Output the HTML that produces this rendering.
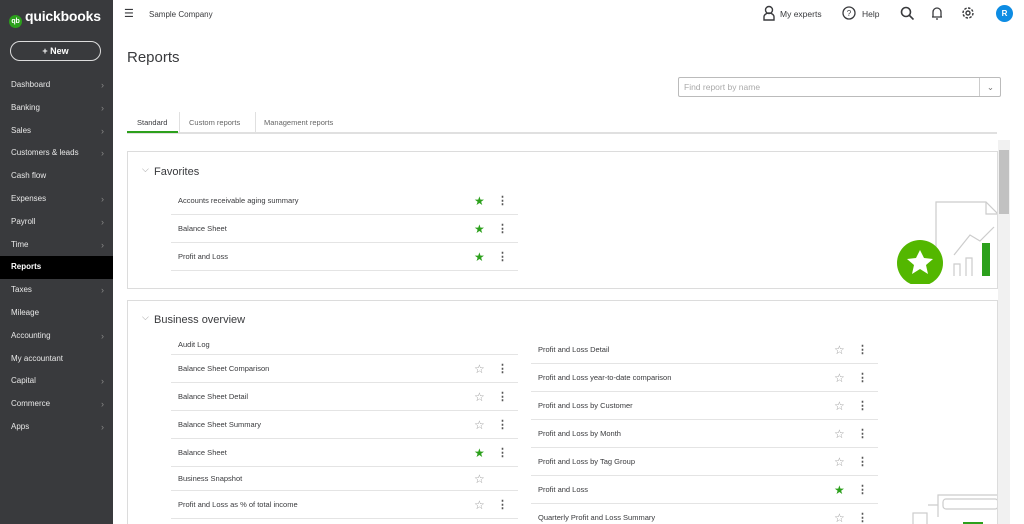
<!DOCTYPE html>
<html style="overflow:hidden;height:524px"><head><style>
*{box-sizing:border-box;margin:0;padding:0}
body{width:1024px;height:524px;overflow:hidden;font-family:"Liberation Sans",sans-serif;background:#fff;position:relative;color:#393a3d}
.sb{position:absolute;left:0;top:0;width:113px;height:524px;background:#393a3d;color:#fff}
.logo{position:absolute;left:9px;top:8px;font-size:14px;font-weight:bold;letter-spacing:-0.2px}
.logo .c{display:inline-block;width:13px;height:13px;border-radius:50%;background:#2ca01c;vertical-align:-2px;margin-right:3px;font-size:7px;text-align:center;line-height:13px}
.new{position:absolute;left:10px;top:41px;width:91px;height:20px;border:1px solid #ddd;border-radius:10px;text-align:center;font-size:9px;font-weight:bold;line-height:18px}
.nav{position:absolute;left:0;top:74px;width:113px}
.nav div{height:22.8px;line-height:22.8px;font-size:8px;padding-left:11px;color:#e8e8e8;position:relative}
.nav div.a{background:#000;color:#fff;font-weight:bold}
.nav div.r:after{content:"›";position:absolute;right:9px;color:#888;font-size:9px}
.t{position:absolute;font-size:8.5px;color:#393a3d}
h1{position:absolute;left:127px;top:49px;font-size:15px;font-weight:normal;color:#393a3d}
.search{position:absolute;left:678px;top:77px;width:323px;height:20px;border:1px solid #bbb;border-radius:2px;font-size:8.5px;color:#aaa;line-height:18px;padding-left:5px}
.search:after{content:"";position:absolute;right:0;top:0;width:20px;height:18px;border-left:1px solid #ccc}
.tabs{position:absolute;left:127px;top:112px;width:870px;height:22px;border-bottom:2px solid #e0e0e0;font-size:7.5px}
.tabs span{position:absolute;top:6px}
.card{position:absolute;left:127px;width:871px;border:1px solid #dcdcdc;background:#fff;overflow:hidden}
.card h2{position:absolute;left:26px;font-size:11px;font-weight:normal;color:#393a3d}
.card h2:before{content:"⌵";position:absolute;left:-12px;top:-2px;font-size:9px;color:#999}
.row{position:absolute;height:28px;border-bottom:1px solid #e4e4e4;font-size:7.5px;line-height:28px;padding-left:7px;width:347px}
.st{position:absolute;left:303px;top:0;font-size:12px;color:#999}
.st.g{color:#2ca01c}
.dt{position:absolute;left:326px;top:0;font-size:11px;font-weight:bold;color:#555}
.scr{position:absolute;left:998px;top:140px;width:12px;height:384px;background:#f1f1f1}
.scr div{position:absolute;left:1px;top:10px;width:10px;height:64px;background:#c1c1c1}
</style></head><body>
<div class="sb">
<div class="logo"><span class="c">qb</span>quickbooks</div>
<div class="new">+ New</div>
<div class="nav">
<div class="r">Dashboard</div><div class="r">Banking</div><div class="r">Sales</div><div class="r">Customers &amp; leads</div><div>Cash flow</div><div class="r">Expenses</div><div class="r">Payroll</div><div class="r">Time</div><div class="a">Reports</div><div class="r">Taxes</div><div>Mileage</div><div class="r">Accounting</div><div>My accountant</div><div class="r">Capital</div><div class="r">Commerce</div><div class="r">Apps</div>
</div></div>
<div class="t" style="left:124px;top:7px;font-size:11px">☰</div>
<div class="t" style="left:149px;top:10px;font-size:8px">Sample Company</div>
<svg style="position:absolute;left:762px;top:5px" width="14" height="16" viewBox="0 0 14 16" fill="none" stroke="#393a3d" stroke-width="1.4"><circle cx="7" cy="5" r="3.5"/><path d="M2 15v-3a5 4 0 0 1 10 0v3z"/></svg>
<div class="t" style="left:780px;top:9px">My experts</div>
<svg style="position:absolute;left:842px;top:6px" width="14" height="14"><circle cx="7" cy="7" r="6" fill="none" stroke="#393a3d" stroke-width="1.3"/><text x="7" y="10" font-size="8" text-anchor="middle" fill="#393a3d" font-family="Liberation Sans">?</text></svg>
<div class="t" style="left:862px;top:9px">Help</div>
<svg style="position:absolute;left:900px;top:6px" width="14" height="14" fill="none" stroke="#393a3d" stroke-width="1.6"><circle cx="6" cy="6" r="4.5"/><path d="M9.5 9.5l4 4"/></svg>
<svg style="position:absolute;left:931px;top:6px" width="12" height="14" fill="none" stroke="#393a3d" stroke-width="1.3"><path d="M2 11V6a4 4 0 0 1 8 0v5zM1 11h10M5 13h2"/></svg>
<svg style="position:absolute;left:961px;top:6px" width="14" height="14" fill="none" stroke="#393a3d" stroke-width="1.4"><circle cx="7" cy="7" r="2"/><circle cx="7" cy="7" r="5" stroke-dasharray="2.5 1.4"/></svg>
<div style="position:absolute;left:996px;top:5px;width:17px;height:17px;border-radius:50%;background:#0d8ce3;color:#fff;font-size:8px;font-weight:bold;text-align:center;line-height:17px">R</div>
<h1>Reports</h1>
<div class="search">Find report by name<span style="position:absolute;right:6px;top:0;color:#777">⌄</span></div>
<div class="tabs">
<span style="left:10px;color:#393a3d">Standard</span><div style="position:absolute;left:0;top:19px;width:51px;height:2px;background:#2ca01c"></div>
<div style="position:absolute;left:52px;top:0;height:20px;border-left:1px solid #e0e0e0"></div>
<span style="left:62px;color:#666">Custom reports</span>
<div style="position:absolute;left:128px;top:0;height:20px;border-left:1px solid #e0e0e0"></div>
<span style="left:137px;color:#666">Management reports</span></div>

<div class="card" style="top:151px;height:138px">
<h2 style="top:14px">Favorites</h2>
<div class="row" style="left:43px;top:35px">Accounts receivable aging summary<span class="st g">★</span><span class="dt">⋮</span></div>
<div class="row" style="left:43px;top:63px">Balance Sheet<span class="st g">★</span><span class="dt">⋮</span></div>
<div class="row" style="left:43px;top:91px">Profit and Loss<span class="st g">★</span><span class="dt">⋮</span></div>
<svg style="position:absolute;left:768px;top:48px" width="104" height="84" fill="none" stroke="#ccc" stroke-width="1.2"><path d="M40 52V2h50l12 12v40"/><path d="M90 2v12h12"/><path d="M58 55l16-20 10 6 14-14"/><path d="M58 76V64h6v12M70 76V58h6v18"/><rect x="86" y="43" width="8" height="33" fill="#2ca01c" stroke="none"/><circle cx="24" cy="63" r="23" fill="#53b700" stroke="none"/><path d="M24 50l4 8 9 1-7 6 2 9-8-5-8 5 2-9-7-6 9-1z" fill="#fff" stroke="none"/></svg>
</div>

<div class="card" style="top:300px;height:230px">
<h2 style="top:13px">Business overview</h2>
<div class="row" style="left:43px;top:33px;height:21px;line-height:21px">Audit Log</div>
<div class="row" style="left:43px;top:54px">Balance Sheet Comparison<span class="st">☆</span><span class="dt">⋮</span></div>
<div class="row" style="left:43px;top:82px">Balance Sheet Detail<span class="st">☆</span><span class="dt">⋮</span></div>
<div class="row" style="left:43px;top:110px">Balance Sheet Summary<span class="st">☆</span><span class="dt">⋮</span></div>
<div class="row" style="left:43px;top:138px">Balance Sheet<span class="st g">★</span><span class="dt">⋮</span></div>
<div class="row" style="left:43px;top:166px;height:24px;line-height:24px">Business Snapshot<span class="st">☆</span></div>
<div class="row" style="left:43px;top:190px">Profit and Loss as % of total income<span class="st">☆</span><span class="dt">⋮</span></div>
<div class="row" style="left:403px;top:35px">Profit and Loss Detail<span class="st">☆</span><span class="dt">⋮</span></div>
<div class="row" style="left:403px;top:63px">Profit and Loss year-to-date comparison<span class="st">☆</span><span class="dt">⋮</span></div>
<div class="row" style="left:403px;top:91px">Profit and Loss by Customer<span class="st">☆</span><span class="dt">⋮</span></div>
<div class="row" style="left:403px;top:119px">Profit and Loss by Month<span class="st">☆</span><span class="dt">⋮</span></div>
<div class="row" style="left:403px;top:147px">Profit and Loss by Tag Group<span class="st">☆</span><span class="dt">⋮</span></div>
<div class="row" style="left:403px;top:175px">Profit and Loss<span class="st g">★</span><span class="dt">⋮</span></div>
<div class="row" style="left:403px;top:203px">Quarterly Profit and Loss Summary<span class="st">☆</span><span class="dt">⋮</span></div>
<svg style="position:absolute;left:780px;top:186px" width="90" height="40" fill="none" stroke="#ccc" stroke-width="1.2"><path d="M30 30V8h60M20 18h10"/><rect x="35" y="12" width="55" height="10" rx="3"/><rect x="5" y="26" width="14" height="14"/><rect x="55" y="35" width="20" height="5" fill="#2ca01c" stroke="none"/></svg>
</div>
<div class="scr"><div></div></div>
</body></html>
